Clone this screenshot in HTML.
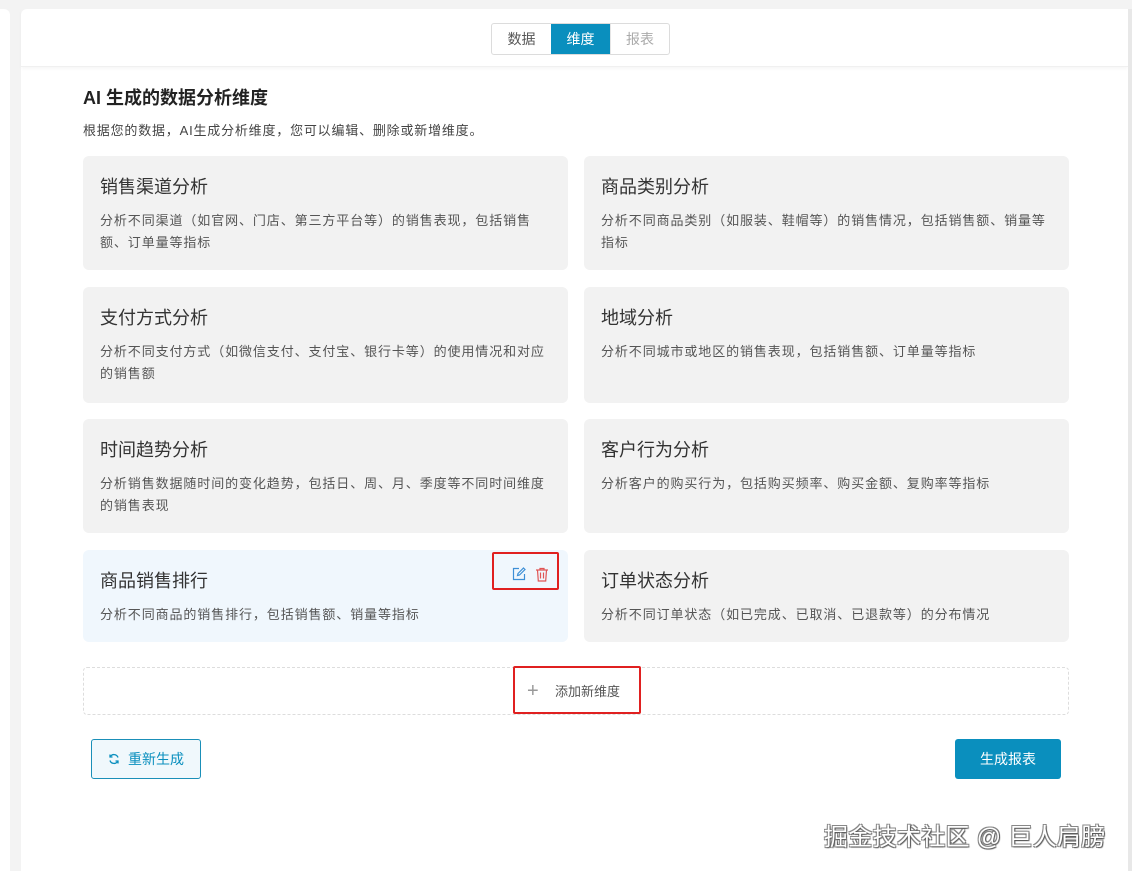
<!DOCTYPE html>
<html><head><meta charset="utf-8"><style>
*{box-sizing:border-box;margin:0;padding:0}
body{width:1132px;height:871px;background:#f3f3f3;font-family:"Liberation Sans","Noto Sans CJK SC",sans-serif;position:relative;overflow:hidden;color:#333}
.side{position:absolute;left:0;top:9px;width:10px;height:862px;background:#fff;border-radius:0 6px 0 0}
.main{position:absolute;left:21px;top:9px;width:1107px;height:862px;background:#fff;border-radius:6px 0 0 0}
.hdr{position:absolute;left:0;top:0;width:100%;height:58px;border-bottom:1px solid #f0f0f0;box-shadow:0 2px 3px rgba(0,0,0,.03)}
.tabs{position:absolute;left:470px;top:14px;display:flex;border:1px solid #dcdcdc;border-radius:3px;overflow:hidden}
.tabs div{width:59px;height:30px;line-height:30px;text-align:center;font-size:14px;color:#555}
.tabs .on{background:#0a8fbe;color:#fff}
.tabs .off{color:#aaa;border-left:1px solid #e5e5e5}
.abs{position:absolute}
h1{position:absolute;left:62px;top:75px;font-size:18px;font-weight:bold;color:#222}
.sub{position:absolute;left:62px;top:111px;font-size:13px;color:#444;letter-spacing:0.8px}
.card{position:absolute;width:485px;background:#f2f2f2;border-radius:6px;padding:20px 10px 20px 17px}
.card.sel{background:#f0f7fd}
.card h3{font-size:18px;font-weight:normal;color:#333;line-height:22px;margin-top:0}
.card p{font-size:13px;color:#555;line-height:22px;margin-top:12px;letter-spacing:0.9px;white-space:nowrap}
.add{position:absolute;left:62px;top:658px;width:986px;height:48px;border:1px dashed #ddd;border-radius:4px}
.red{position:absolute;border:2px solid #e02020;border-radius:2px}
</style></head><body>
<div class="side"></div>
<div class="main">
<div class="hdr"><div class="tabs"><div>数据</div><div class="on">维度</div><div class="off">报表</div></div></div>
<h1>AI 生成的数据分析维度</h1>
<div class="sub">根据您的数据，AI生成分析维度，您可以编辑、删除或新增维度。</div>

<div class="card" style="left:62px;top:147px;height:114px"><h3>销售渠道分析</h3><p>分析不同渠道（如官网、门店、第三方平台等）的销售表现，包括销售<br>额、订单量等指标</p></div>
<div class="card" style="left:563px;top:147px;height:114px"><h3>商品类别分析</h3><p>分析不同商品类别（如服装、鞋帽等）的销售情况，包括销售额、销量等<br>指标</p></div>
<div class="card" style="left:62px;top:278px;height:116px"><h3>支付方式分析</h3><p>分析不同支付方式（如微信支付、支付宝、银行卡等）的使用情况和对应<br>的销售额</p></div>
<div class="card" style="left:563px;top:278px;height:116px"><h3>地域分析</h3><p>分析不同城市或地区的销售表现，包括销售额、订单量等指标</p></div>
<div class="card" style="left:62px;top:410px;height:114px"><h3>时间趋势分析</h3><p>分析销售数据随时间的变化趋势，包括日、周、月、季度等不同时间维度<br>的销售表现</p></div>
<div class="card" style="left:563px;top:410px;height:114px"><h3>客户行为分析</h3><p>分析客户的购买行为，包括购买频率、购买金额、复购率等指标</p></div>
<div class="card sel" style="left:62px;top:541px;height:92px"><h3>商品销售排行</h3><p>分析不同商品的销售排行，包括销售额、销量等指标</p></div>
<div class="card" style="left:563px;top:541px;height:92px"><h3>订单状态分析</h3><p>分析不同订单状态（如已完成、已取消、已退款等）的分布情况</p></div>

<svg class="abs" style="left:491px;top:558px" width="14" height="14" viewBox="0 0 14 14" fill="none" stroke="#3d8fd6" stroke-width="1.2"><path d="M7 1.5H1.5v11h11V7"/><path d="M11.5 1l1.5 1.5L7.5 8 5.5 8.5 6 6.5z"/></svg>
<svg class="abs" style="left:514px;top:558px" width="14" height="15" viewBox="0 0 14 15" fill="none" stroke="#e05555" stroke-width="1.2"><path d="M1 3h12M5 3V1.5h4V3M2.5 3l.8 11h7.4l.8-11M5.5 5.5v6M8.5 5.5v6"/></svg>
<div class="red" style="left:471px;top:543px;width:67px;height:38px"></div>

<div class="add"></div>
<div class="abs" style="left:506px;top:672px;font-size:20px;color:#999;line-height:20px">+</div>
<div class="abs" style="left:534px;top:672px;font-size:13px;color:#555">添加新维度</div>
<div class="red" style="left:492px;top:657px;width:128px;height:48px"></div>

<div class="abs" style="left:70px;top:730px;width:110px;height:40px;border:1px solid #1a8fb8;border-radius:3px;background:#f0f8fc;color:#0a8fbe;font-size:14px;line-height:38px;padding-left:36px">重新生成</div>
<svg class="abs" style="left:87px;top:744px" width="12" height="12" viewBox="0 0 12 12" fill="none" stroke="#0a8fbe" stroke-width="1.3"><path d="M10 4.5A4.2 4.2 0 0 0 2.2 4M2 7.5A4.2 4.2 0 0 0 9.8 8"/><path d="M2 1.5V4h2.5M10 10.5V8H7.5"/></svg>
<div class="abs" style="left:934px;top:730px;width:106px;height:40px;background:#0a8fbe;border-radius:3px;color:#fff;font-size:14px;line-height:40px;text-align:center">生成报表</div>
<div class="abs" style="left:803px;top:808px;font-size:24px;color:#fff;text-shadow:1px 1px 1px #555,-1px -1px 0 #888,1px -1px 0 #888,-1px 1px 0 #888;letter-spacing:0.3px;white-space:nowrap">掘金技术社区 @ 巨人肩膀</div>
</div>
<div class="abs" style="left:1128px;top:9px;width:4px;height:862px;background:#e8e8e8"></div>
</body></html>
